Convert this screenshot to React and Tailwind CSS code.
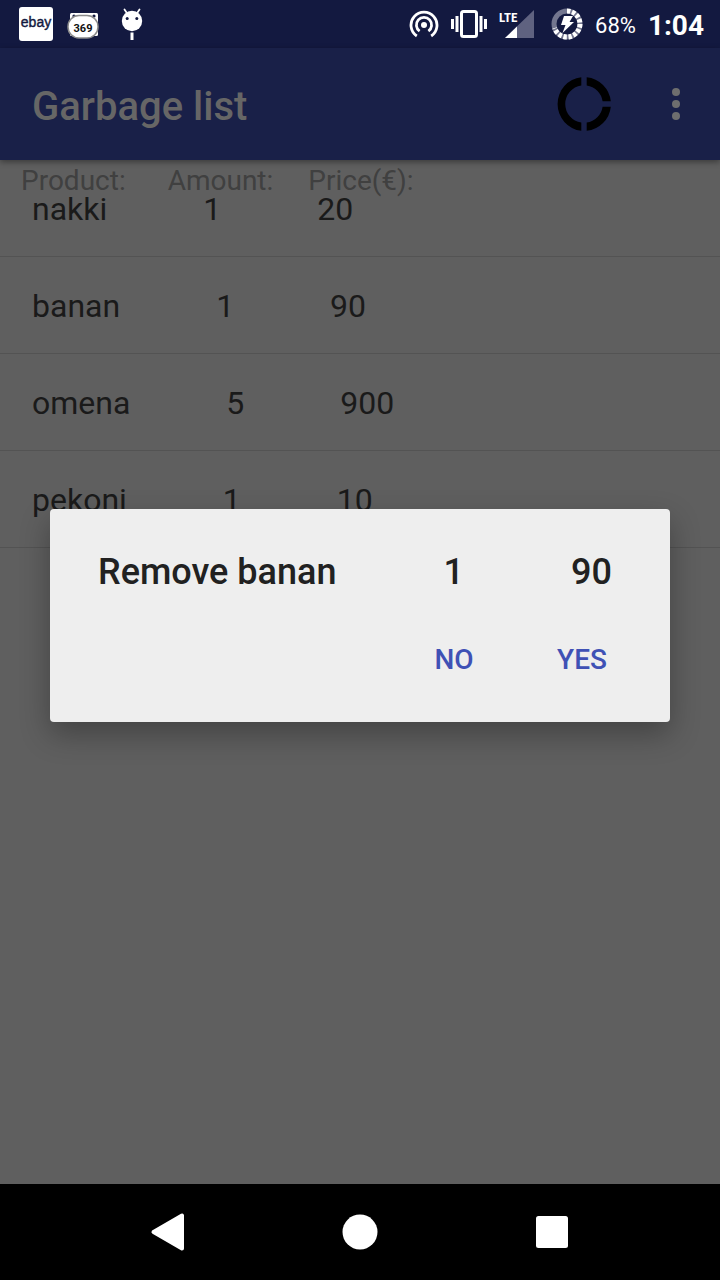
const items = [
  { name: "nakki", amount: 1, price: 20 },
  { name: "banan", amount: 1, price: 90 },
  { name: "omena", amount: 5, price: 900 },
  { name: "pekoni", amount: 1, price: 10 },
];

function EbayIcon() {
  return (
    <svg width="34" height="34" viewBox="0 0 34 34" aria-hidden="true">
      <rect width="34" height="34" rx="3" fill="#fff" />
      <text x="17" y="20" textAnchor="middle" fontFamily="Liberation Sans, sans-serif" fontSize="14" stroke="#131940" strokeWidth="0.400" fill="#131940">ebay</text>
    </svg>
  );
}

function CounterIcon() {
  return (
    <svg width="34" height="34" viewBox="0 0 34 34" aria-hidden="true">
      <rect x="3" y="6" width="28" height="23" rx="1.500" fill="#fff" />
      <circle cx="7" cy="9" r="1.600" fill="#131940" />
      <circle cx="27" cy="9" r="1.600" fill="#131940" />
      <rect x="1" y="8.500" width="30" height="22.500" rx="11" fill="#fff" stroke="#8b8b8b" strokeWidth="1.500" />
      <text x="16" y="25" textAnchor="middle" fontFamily="Roboto, sans-serif" fontWeight="700" fontSize="11" fill="#111">369</text>
    </svg>
  );
}

function DroidIcon() {
  return (
    <svg width="24" height="34" viewBox="0 0 24 34" aria-hidden="true">
      <path d="M4.500 2.500 7.500 7M19.500 2.500 16.500 7" stroke="#fff" strokeWidth="1.800" strokeLinecap="round" />
      <circle cx="12" cy="14" r="10.200" fill="#fff" />
      <circle cx="7.200" cy="11.500" r="1.500" fill="#131940" />
      <circle cx="16.800" cy="11.500" r="1.500" fill="#131940" />
      <rect x="10.500" y="25.500" width="3" height="7.500" fill="#fff" />
    </svg>
  );
}

function HotspotIcon() {
  return (
    <svg width="30" height="30" viewBox="0 0 30 30" fill="none" stroke="#fff" strokeWidth="2.800" aria-hidden="true">
      <circle cx="15" cy="16" r="3" fill="#fff" stroke="none" />
      <path d="M10.600 22.200A7.600 7.600 0 1 1 19.400 22.200" />
      <path d="M7.800 27A13 13 0 1 1 22.200 27" />
    </svg>
  );
}

function VibrateIcon() {
  return (
    <svg width="36" height="30" viewBox="0 0 36 30" aria-hidden="true">
      <rect x="10.500" y="2.500" width="15" height="25" rx="2" fill="none" stroke="#fff" strokeWidth="3" />
      <path d="M0 10h3v10H0zM4.500 7h3v16h-3zM28.500 7h3v16h-3zM33 10h3v10h-3z" fill="#fff" />
    </svg>
  );
}

function SignalIcon() {
  return (
    <svg width="36" height="30" viewBox="0 0 36 30" aria-hidden="true">
      <path d="M35 1v28H6z" fill="#5f6280" />
      <path d="M18 17.500V29H6z" fill="#fff" />
      <path d="M0 0h19v14H0z" fill="#131940" />
      <text x="0" y="13" fontFamily="Liberation Sans Narrow, Roboto Condensed, Roboto, sans-serif" fontWeight="700" fontSize="13" fill="#fff">LTE</text>
    </svg>
  );
}

function BatteryIcon() {
  return (
    <svg width="32" height="32" viewBox="0 0 32 32" aria-hidden="true">
      <circle cx="16" cy="16" r="13" fill="none" stroke="#73768f" strokeWidth="5" />
      <path d="M16 3A13 13 0 1 1 3.600 20" fill="none" stroke="#fff" strokeWidth="5" strokeDasharray="3.400 1.700" />
      <path d="M13 8h9l-3.500 6H23L11.500 25l3-8H10z" fill="#fff" />
    </svg>
  );
}

function StatusBar() {
  return (
    <div className="flex h-12 items-center justify-between bg-[#131940] pr-4 pl-[19px] text-white">
      <div className="flex items-center gap-3.5">
        <EbayIcon />
        <CounterIcon />
        <div className="pl-[5px]"><DroidIcon /></div>
      </div>
      <div className="flex items-center">
        <div className="flex items-center gap-3">
          <HotspotIcon />
          <VibrateIcon />
          <SignalIcon />
        </div>
        <div className="flex items-center pl-4">
          <BatteryIcon />
          <span className="pt-1 pl-3 text-[22px] leading-8">68%</span>
          <span className="pt-1 pl-3 text-[28px] leading-8 font-bold">1:04</span>
        </div>
      </div>
    </div>
  );
}

function AppBar() {
  return (
    <header className="relative z-10 flex h-28 items-center justify-between bg-[#192048] pr-5 pl-8 shadow-[0_2px_6px_rgba(0,0,0,0.4)]">
      <h1 className="pt-1.5 text-[40px] leading-[48px] font-medium text-[#666666]">Garbage list</h1>
      <div className="flex items-center gap-9">
        <button type="button" aria-label="Usage" className="flex h-16 w-16 items-center justify-center">
          <svg width="54" height="54" viewBox="0 0 54 54" fill="#000" aria-hidden="true">
            <path d="M24.300 0.200V8.400A18.800 18.800 0 0 0 24.300 45.600V53.800A27 27 0 0 1 24.300 0.200Z" />
            <path d="M29.700 0.200A27 27 0 0 1 53.800 24.300H45.600A18.800 18.800 0 0 0 29.700 8.400Z" />
            <path d="M29.700 53.800A27 27 0 0 0 53.800 29.700H45.600A18.800 18.800 0 0 1 29.700 45.600Z" />
          </svg>
        </button>
        <button type="button" aria-label="More options" className="flex h-16 w-12 items-center justify-center">
          <svg width="8" height="32" viewBox="0 0 8 32" fill="#6e6e6e" aria-hidden="true">
            <circle cx="4" cy="4" r="4" />
            <circle cx="4" cy="16" r="4" />
            <circle cx="4" cy="28" r="4" />
          </svg>
        </button>
      </div>
    </header>
  );
}

function RemoveDialog({ item }) {
  return (
    <div className="absolute inset-0 z-20 flex items-center justify-center px-[50px] pb-px">
      <div
        role="dialog"
        aria-modal="true"
        aria-labelledby="remove-title"
        className="w-full rounded-sm bg-[#eeeeee] pt-[39px] pb-[26px] shadow-[0_12px_30px_rgba(0,0,0,0.3)]"
      >
        <h2 id="remove-title" className="flex gap-[107px] px-12 text-[36px] leading-[48px] font-medium text-[#212121]">
          <span>Remove {item.name}</span>
          <span>{item.amount}</span>
          <span>{item.price}</span>
        </h2>
        <div className="flex justify-end pt-7 pr-6">
          <button type="button" className="h-[72px] w-32 text-[28px] font-medium text-[#3f51b5]">NO</button>
          <button type="button" className="h-[72px] w-32 text-[28px] font-medium text-[#3f51b5]">YES</button>
        </div>
      </div>
    </div>
  );
}

function NavBar() {
  return (
    <nav className="flex h-24 items-center justify-center gap-24 bg-black">
      <button type="button" aria-label="Back" className="flex h-24 w-24 items-center justify-center">
        <svg width="48" height="48" viewBox="0 0 48 48" aria-hidden="true">
          <path d="M38 7.500V40.500L9.500 24Z" fill="#fff" stroke="#fff" strokeWidth="4" strokeLinejoin="round" />
        </svg>
      </button>
      <button type="button" aria-label="Home" className="flex h-24 w-24 items-center justify-center">
        <svg width="48" height="48" viewBox="0 0 48 48" aria-hidden="true">
          <circle cx="24" cy="24" r="17.500" fill="#fff" />
        </svg>
      </button>
      <button type="button" aria-label="Recent apps" className="flex h-24 w-24 items-center justify-center">
        <svg width="48" height="48" viewBox="0 0 48 48" aria-hidden="true">
          <rect x="8" y="8" width="32" height="32" rx="2.500" fill="#fff" />
        </svg>
      </button>
    </nav>
  );
}

export default function App() {
  return (
    <div className="flex min-h-screen flex-col bg-[#5f5f5f] font-[Roboto,sans-serif]">
      <StatusBar />
      <div className="relative flex flex-1 flex-col">
        <AppBar />
        <main className="relative flex-1">
          <div className="absolute top-0 left-0 flex pt-[5px] pl-[21px] text-[28px] leading-8 text-[#404040]">
            <span className="mr-[42px]">Product:</span>
            <span className="mr-[35px]">Amount:</span>
            <span>Price(€):</span>
          </div>
          <ul>
            {items.map((item) => (
              <li
                key={item.name}
                className="flex h-[97px] items-center gap-24 border-b border-[#535353] px-8 pt-0.5 text-[32px] leading-10 text-[#1a1a1a]"
              >
                <span>{item.name}</span>
                <span>{item.amount}</span>
                <span>{item.price}</span>
              </li>
            ))}
          </ul>
        </main>
        <RemoveDialog item={items[1]} />
      </div>
      <NavBar />
    </div>
  );
}
